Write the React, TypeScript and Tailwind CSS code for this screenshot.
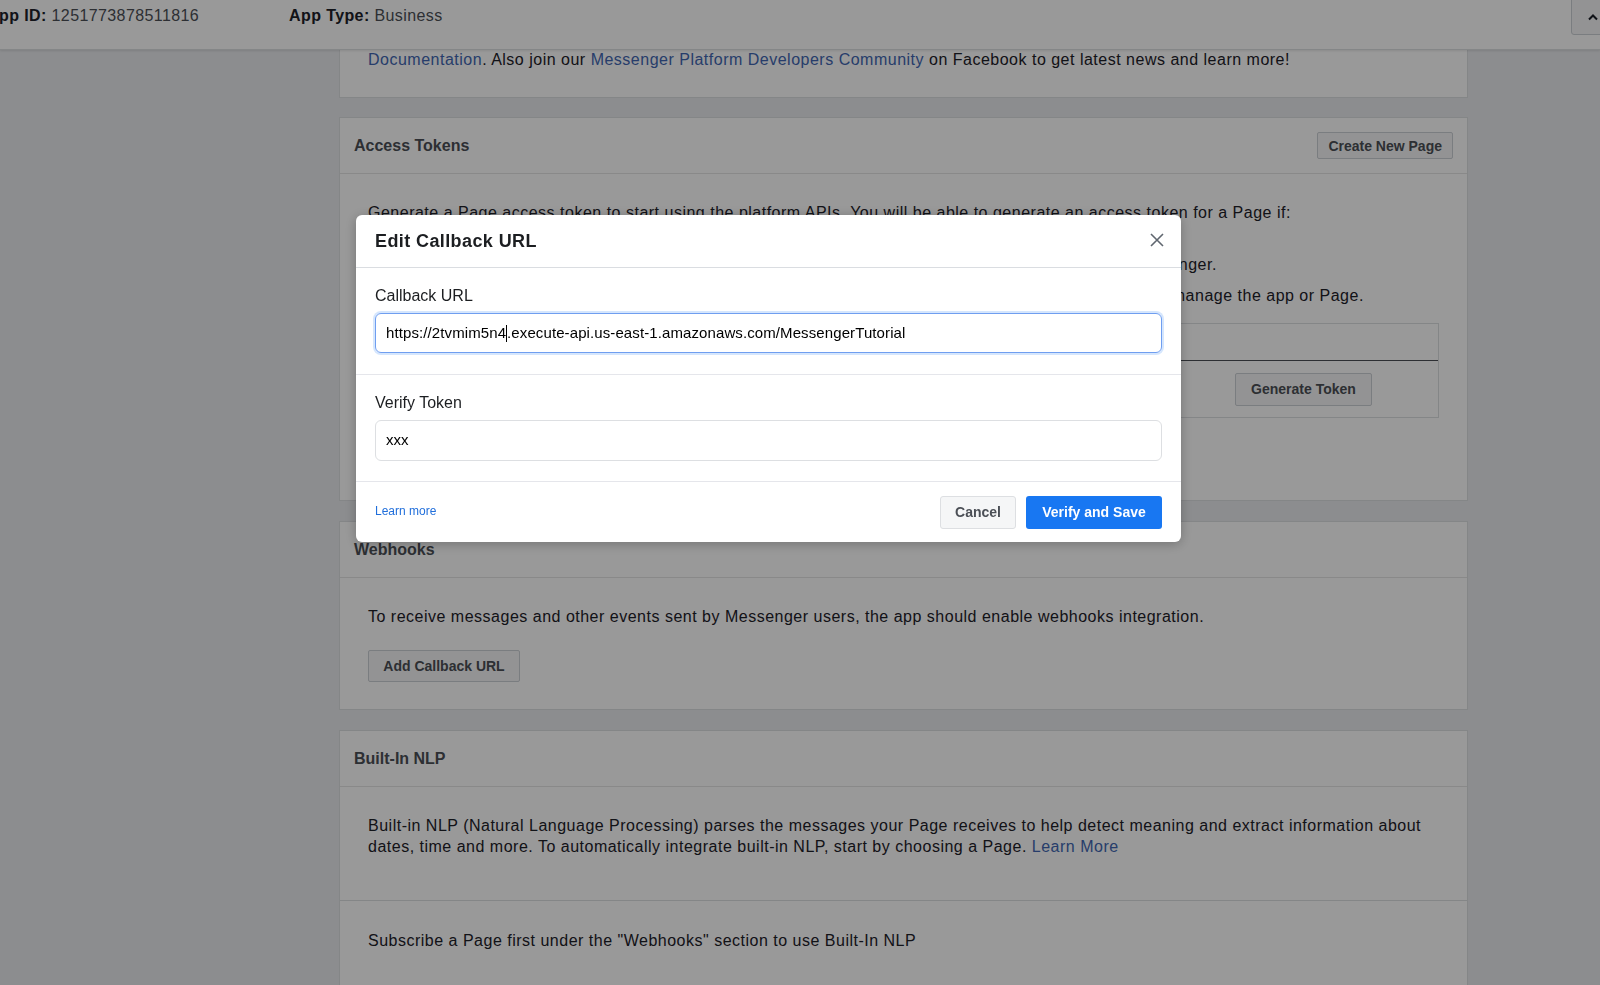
import React from 'react';

const Btn: React.FC<{ children: React.ReactNode; className?: string }> = ({ children, className = '' }) => (
  <button
    className={`border border-[#ccd0d5] bg-[#f5f6f7] rounded-[2px] text-[14px] font-bold text-[#4b4f56] leading-none ${className}`}
  >
    {children}
  </button>
);

const CardHeader: React.FC<{ title: string; children?: React.ReactNode }> = ({ title, children }) => (
  <div className="h-[56px] px-[14px] flex items-center justify-between border-b border-[#e5e5e5]">
    <h3 className="text-[16px] font-bold text-[#4b4f56]">{title}</h3>
    {children}
  </div>
);

export default function App() {
  return (
    <div className="relative w-[1600px] h-[985px] overflow-hidden bg-[#e9ebee] font-['Liberation_Sans',Helvetica,Arial,sans-serif] text-[#1d2129]">
      {/* top app bar */}
      <header className="relative z-10 h-[50px] bg-white border-b border-[#dddfe2] shadow-[0_1px_2px_rgba(0,0,0,0.1)] flex items-start">
        <div className="flex ml-[-13px] mt-[6px] text-[16px] leading-5 tracking-[0.4px] text-[#4b4f56]">
          <div className="w-[302px]">
            <span className="font-bold text-[#1d2129]">App ID:</span> 1251773878511816
          </div>
          <div>
            <span className="font-bold text-[#1d2129]">App Type:</span> Business
          </div>
        </div>
        <div className="ml-auto mr-[-12px] mt-[-1px] w-[41px] h-[36px] border border-[#ccd0d5] bg-[#f5f6f7] rounded-bl-[3px] flex items-center pl-[15px]">
          <svg width="12" height="8" viewBox="0 0 12 8" fill="none">
            <path d="M2 6.5 L6 2.5 L10 6.5" stroke="#1d2129" strokeWidth="2" />
          </svg>
        </div>
      </header>

      <div className="flex">
        <div className="w-[339px] shrink-0" />
        <main className="w-[1129px] flex flex-col gap-5">
          {/* getting started card (scrolled) */}
          <section className="bg-white border border-t-0 border-[#dddfe2] px-[28px] pb-[27px] mb-[-1px]">
            <p className="text-[16px] leading-5 tracking-[0.5px]">
              <a className="text-[#4267b2]">Documentation</a>. Also join our{' '}
              <a className="text-[#4267b2]">Messenger Platform Developers Community</a> on Facebook to get latest news and learn more!
            </p>
          </section>

          {/* access tokens */}
          <section className="bg-white border border-[#dddfe2]">
            <CardHeader title="Access Tokens">
              <Btn className="h-[27px] px-[10px] mr-0">Create New Page</Btn>
            </CardHeader>
            <div className="px-[28px] pt-[29px] pb-[82px] text-[16px] leading-5 tracking-[0.5px]">
              <p className="mb-[6px]">
                Generate a Page access token to start using the platform APIs. You will be able to generate an access token for a Page if:
              </p>
              <ol className="pl-[45px]">
                <li className="mb-[6px]">1. You are one of the Page admins, and</li>
                <li className="mb-[11px]">
                  2. The app has been granted Page's permission to manage and access Page conversations in Messenger.
                </li>
              </ol>
              <p>
                Note: If your app is in dev mode, you can still generate a token but will only be able to access people who manage the app or Page.
              </p>
              <div className="mt-[17px] border border-[#dddfe2] tracking-normal">
                <div className="h-[37px] flex items-center border-b border-[#4b4f56] text-[12px] font-bold text-[#90949c] px-3">
                  <span className="w-[400px]">Page</span>
                  <span>Page Access Token</span>
                </div>
                <div className="h-[56px] flex items-center justify-end pr-[66px]">
                  <Btn className="h-[33px] w-[137px]">Generate Token</Btn>
                </div>
              </div>
            </div>
          </section>

          {/* webhooks */}
          <section className="bg-white border border-[#dddfe2]">
            <CardHeader title="Webhooks" />
            <div className="px-[28px] pt-[29px] pb-[27px] text-[16px] leading-5">
              <p className="tracking-[0.5px]">
                To receive messages and other events sent by Messenger users, the app should enable webhooks integration.
              </p>
              <Btn className="mt-[23px] h-[32px] w-[152px]">Add Callback URL</Btn>
            </div>
          </section>

          {/* built-in nlp */}
          <section className="bg-white border border-[#dddfe2]">
            <CardHeader title="Built-In NLP" />
            <div className="px-[28px] pt-[28px] pb-[43px] text-[16px] leading-[21px] tracking-[0.5px] border-b border-[#dddfe2]">
              <p>
                Built-in NLP (Natural Language Processing) parses the messages your Page receives to help detect meaning and extract information about dates, time and more. To automatically integrate built-in NLP, start by choosing a Page.{' '}
                <a className="text-[#4267b2]">Learn More</a>
              </p>
            </div>
            <div className="px-[28px] pt-[30px] pb-[40px] text-[16px] leading-5 tracking-[0.5px]">
              <p>Subscribe a Page first under the "Webhooks" section to use Built-In NLP</p>
            </div>
          </section>
        </main>
      </div>

      {/* dialog overlay */}
      <div className="fixed inset-0 z-20 bg-black/40">
        <div className="ml-[356px] mt-[215px] w-[825px] bg-white rounded-[6px] shadow-[0_2px_12px_rgba(0,0,0,0.25)] overflow-hidden">
          <div className="h-[53px] pl-[19px] pr-[17px] flex items-center justify-between border-b border-[#dadde1]">
            <h2 className="text-[18px] font-bold tracking-[0.4px] text-[#1c1e21]">Edit Callback URL</h2>
            <svg width="14" height="14" viewBox="0 0 14 14" className="mt-[-3px]">
              <path d="M1 1 L13 13 M13 1 L1 13" stroke="#606770" strokeWidth="1.6" />
            </svg>
          </div>

          <div className="px-[19px] pt-[18px] pb-[21px] border-b border-[#e5e6eb]">
            <label className="block text-[16px] leading-5 text-[#1c1e21] mb-[7px]">Callback URL</label>
            <div className="h-[40px] rounded-[6px] border border-[#6f9ef0] shadow-[0_0_0_2px_rgba(24,119,242,0.18)] flex items-center pl-[10px] text-[15px] tracking-[0.1px] text-black">
              https://2tvmim5n4
              <span className="inline-block w-px h-[17px] bg-black" />
              .execute-api.us-east-1.amazonaws.com/MessengerTutorial
            </div>
          </div>

          <div className="px-[19px] pt-[18px] pb-[20px] border-b border-[#e5e6eb]">
            <label className="block text-[16px] leading-5 text-[#1c1e21] mb-[7px]">Verify Token</label>
            <div className="h-[41px] rounded-[6px] border border-[#dddfe2] flex items-center pl-[10px] text-[15px] text-black">
              xxx
            </div>
          </div>

          <div className="h-[60px] px-[19px] flex items-center justify-between">
            <a className="text-[12px] text-[#216fdb] mt-[-3px]">Learn more</a>
            <div className="flex gap-[10px]">
              <button className="h-[33px] w-[76px] rounded-[3px] border border-[#dddfe2] bg-[#f5f6f7] text-[14px] font-bold text-[#4b4f56]">
                Cancel
              </button>
              <button className="h-[33px] w-[136px] rounded-[3px] bg-[#1877f2] text-[14px] font-bold text-white">
                Verify and Save
              </button>
            </div>
          </div>
        </div>
      </div>
    </div>
  );
}
